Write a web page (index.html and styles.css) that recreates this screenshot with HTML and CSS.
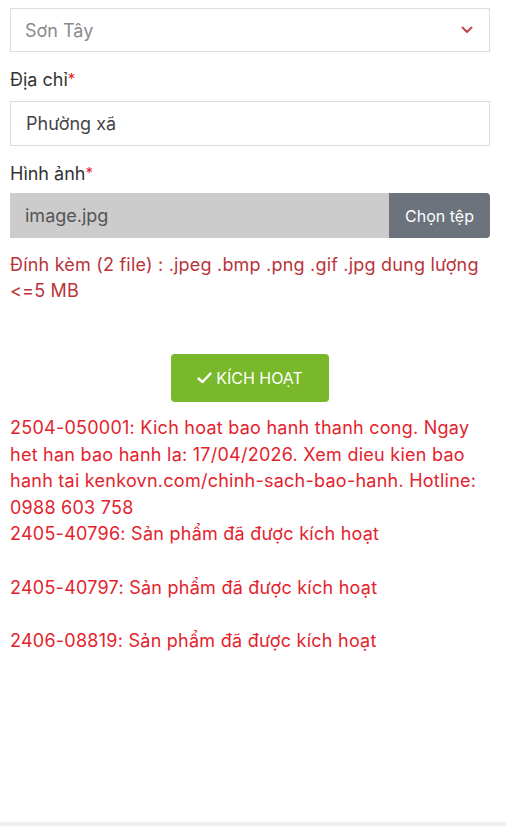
FILE: index.html
```html
<!DOCTYPE html>
<html lang="vi">
<head>
<meta charset="utf-8">
<link rel="stylesheet" href="styles.css">
</head>
<body>
<div class="page">
  <div class="select">
    <span class="select-text">Sơn Tây</span>
    <svg class="chev" width="12" height="8" viewBox="0 0 12 8"><path d="M1.5 1.5 L6 6 L10.5 1.5" fill="none" stroke="#c0454a" stroke-width="2" stroke-linecap="round" stroke-linejoin="round"/></svg>
  </div>
  <div class="label">Địa chỉ<span class="req">*</span></div>
  <div class="input">Phường xã</div>
  <div class="label">Hình ảnh<span class="req">*</span></div>
  <div class="file">
    <span class="file-name">image.jpg</span>
    <span class="file-btn">Chọn tệp</span>
  </div>
  <div class="hint">Đính kèm (2 file) : .jpeg .bmp .png .gif .jpg dung lượng &lt;=5 MB</div>
  <div class="actions">
    <button class="activate"><svg class="check" width="15" height="12" viewBox="0 0 15 12"><path d="M1.5 6.5 L5.5 10 L13.5 1.5" fill="none" stroke="#fff" stroke-width="2.4" stroke-linecap="round" stroke-linejoin="round"/></svg>KÍCH HOẠT</button>
  </div>
  <div class="result">2504-050001: Kich hoat bao hanh thanh cong. Ngay het han bao hanh la: 17/04/2026. Xem dieu kien bao hanh tai kenkovn.com/chinh-sach-bao-hanh. Hotline: 0988 603 758<br>2405-40796: Sản phẩm đã được kích hoạt<br><br>2405-40797: Sản phẩm đã được kích hoạt<br><br>2406-08819: Sản phẩm đã được kích hoạt</div>
</div>
<div class="bottom-bar"></div>
</body>
</html>
```

FILE: styles.css
```css
html, body {
  margin: 0;
  padding: 0;
  background: #fff;
}
body {
  font-family: Inter, "Liberation Sans", Arial, sans-serif;
  width: 506px;
  height: 826px;
  overflow: hidden;
  position: relative;
}
.page {
  padding: 8px 16px 0 10px;
  display: flex;
  flex-direction: column;
}
.select {
  height: 42px;
  border: 1px solid #dcdcdc;
  display: flex;
  align-items: center;
  justify-content: space-between;
  padding: 0 16px 0 14px;
}
.select-text {
  font-size: 18px;
  color: #8a8a8a;
}
.chev {
  display: block;
}
.label {
  font-size: 18px;
  color: #333;
  margin-top: 15px;
  line-height: 26px;
}
.req {
  color: #e0252e;
  font-size: 15px;
  vertical-align: top;
  position: relative;
  top: -1px;
}
.input {
  margin-top: 8px;
  height: 43px;
  border: 1px solid #dcdcdc;
  display: flex;
  align-items: center;
  padding-left: 15px;
  font-size: 18px;
  color: #444;
}
.file {
  margin-top: 6px;
  height: 45px;
  display: flex;
  background: #cccccc;
  border-radius: 0 4px 4px 0;
  overflow: hidden;
}
.file-name {
  flex: 1;
  display: flex;
  align-items: center;
  padding-left: 15px;
  font-size: 18px;
  color: #555;
}
.file-btn {
  width: 101px;
  background: #6c737d;
  color: #fff;
  font-size: 16px;
  display: flex;
  align-items: center;
  justify-content: center;
}
.hint {
  margin-top: 14px;
  font-size: 18px;
  line-height: 26px;
  letter-spacing: 0.2px;
  color: #b8343a;
}
.actions {
  display: flex;
  justify-content: center;
  margin-top: 50px;
}
.activate {
  width: 158px;
  height: 48px;
  background: #78b82a;
  border: none;
  border-radius: 4px;
  color: #fff;
  font-family: Inter, "Liberation Sans", Arial, sans-serif;
  font-size: 16px;
  display: flex;
  align-items: center;
  justify-content: center;
  gap: 4px;
  padding: 0;
}
.check {
  display: block;
}
.result {
  margin-top: 13px;
  font-size: 18px;
  line-height: 26.6px;
  letter-spacing: 0.25px;
  color: #e3232d;
}
.bottom-bar {
  position: absolute;
  left: 0;
  right: 0;
  bottom: 0;
  height: 4px;
  background: #efefef;
}
```
